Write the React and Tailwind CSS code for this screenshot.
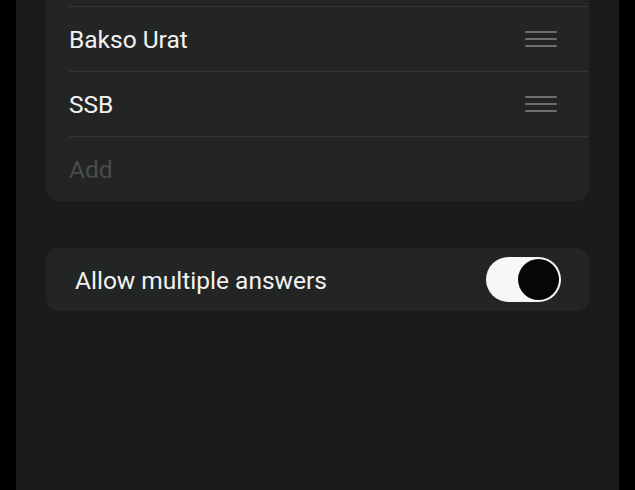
function DragHandle() {
  return (
    <div className="flex w-8 flex-col gap-[5px]">
      <span className="h-[2px] w-full rounded bg-[#6e706f]" />
      <span className="h-[2px] w-full rounded bg-[#6e706f]" />
      <span className="h-[2px] w-full rounded bg-[#6e706f]" />
    </div>
  );
}

const OPTIONS = ["Bakso Urat", "SSB"];

export default function App() {
  return (
    <div className="flex h-[490px] w-[635px] bg-black font-['Roboto',sans-serif]">
      <div className="ml-4 flex w-[603px] flex-col bg-[#1b1b1e] px-[30px]">
        <div className="rounded-b-[14px] bg-[#232524] pl-[23px]">
          <div className="h-[7px] border-b border-[#333635]" />
          {OPTIONS.map((name) => (
            <div
              key={name}
              className="flex h-[65px] items-center justify-between border-b border-[#333635] pr-[32px]"
            >
              <span className="pt-[3px] text-[24.5px] text-[#f2f2f2]">{name}</span>
              <DragHandle />
            </div>
          ))}
          <div className="flex h-[64px] items-center">
            <span className="pt-[3px] text-[24.5px] text-[#4a4c4b]">Add</span>
          </div>
        </div>

        <div className="mt-[47px] flex h-[63px] items-center justify-between rounded-[13px] bg-[#232524] pl-[29px] pr-[28px]">
          <span className="pt-[3px] text-[24.5px] text-[#f2f2f2]">Allow multiple answers</span>
          <div className="flex h-[45px] w-[75px] items-center justify-end rounded-full bg-[#f7f7f7] pr-[2px]">
            <div className="h-[41px] w-[41px] rounded-full bg-[#060606]" />
          </div>
        </div>
      </div>
    </div>
  );
}
